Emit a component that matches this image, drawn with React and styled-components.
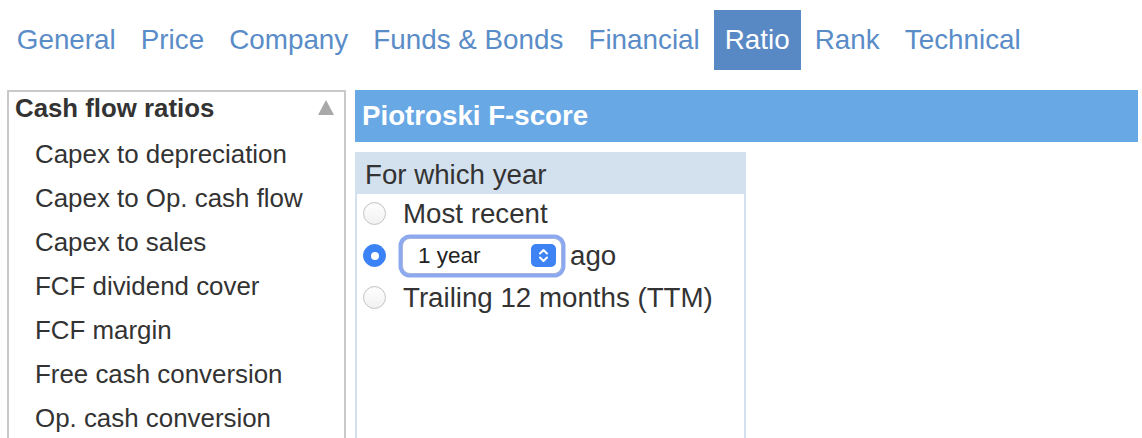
import React from 'react';
import styled, { createGlobalStyle } from 'styled-components';

const GlobalStyle = createGlobalStyle`
  html, body {
    margin: 0;
    padding: 0;
    overflow: hidden;
    background: #fff;
  }
  body {
    font-family: "Liberation Sans", Arial, Helvetica, sans-serif;
    color: #333;
  }
`;

const Page = styled.div`
  width: 1142px;
  height: 438px;
  overflow: hidden;
`;

const TabBar = styled.nav`
  display: flex;
  gap: 3.5px;
  margin: 10px 0 0 6px;
  height: 60px;
`;

const Tab = styled.a`
  display: flex;
  align-items: center;
  padding: 0 10.8px;
  font-size: 27.8px;
  color: ${p => (p.$active ? '#fff' : '#5a8cc8')};
  background: ${p => (p.$active ? '#5889c4' : 'transparent')};
  text-decoration: none;
  cursor: pointer;
`;

const Main = styled.div`
  display: flex;
  align-items: flex-start;
  gap: 9px;
  margin: 20px 4px 0 7px;
`;

const Sidebar = styled.div`
  width: 335px;
  height: 400px;
  border: 2px solid #c9c9c9;
  flex-shrink: 0;
`;

const GroupHead = styled.div`
  display: flex;
  align-items: center;
  justify-content: space-between;
  height: 31px;
  padding: 1px 10px 0 6px;
  font-size: 25.8px;
  font-weight: bold;
  color: #333;
`;

const Arrow = styled.span`
  width: 0;
  height: 0;
  border-left: 8.5px solid transparent;
  border-right: 8.5px solid transparent;
  border-bottom: 15px solid #a9a9a9;
  margin-top: -2px;
`;

const ItemList = styled.ul`
  list-style: none;
  margin: 7.5px 0 0;
  padding: 0;
`;

const Item = styled.li`
  padding-left: 26px;
  line-height: 44px;
  font-size: 25.9px;
  color: #333;
  white-space: nowrap;
`;

const Content = styled.section`
  flex: 1;
`;

const TitleBar = styled.h2`
  margin: 0;
  height: 52px;
  display: flex;
  align-items: center;
  padding-left: 7px;
  background: #68a8e5;
  color: #fff;
  font-size: 27.7px;
  font-weight: bold;
`;

const OptionBox = styled.div`
  width: 387px;
  height: 300px;
  margin-top: 10px;
  border: 2px solid #d3e1ee;
  border-top: 0;
`;

const OptionHead = styled.div`
  height: 42px;
  box-sizing: border-box;
  padding: 3px 0 0 10px;
  display: flex;
  align-items: center;
  margin: 0 -2px;
  background: #d3e1ee;
  font-size: 27.7px;
  color: #333;
`;

const Row = styled.label`
  display: flex;
  align-items: center;
  height: ${p => p.$h}px;
  padding-left: 6px;
  font-size: 27.7px;
  color: #333;
  white-space: nowrap;
`;

const Radio = styled.span`
  position: relative;
  width: 23px;
  height: 23px;
  box-sizing: border-box;
  border-radius: 50%;
  flex-shrink: 0;
  margin-right: ${p => p.$gap}px;
  border: 1px solid ${p => (p.$checked ? '#3b82f6' : '#c4c4c4')};
  background: ${p =>
    p.$checked ? '#3b82f6' : 'linear-gradient(#ffffff, #f1f1f1)'};
  box-shadow: ${p => (p.$checked ? 'none' : 'inset 0 1px 1px rgba(0,0,0,0.04)')};

  &::after {
    content: '';
    display: ${p => (p.$checked ? 'block' : 'none')};
    position: absolute;
    left: 50%;
    top: 50%;
    width: 8px;
    height: 8px;
    margin: -4px 0 0 -4px;
    border-radius: 50%;
    background: #fff;
  }
`;

const Select = styled.div`
  display: flex;
  align-items: center;
  justify-content: space-between;
  box-sizing: border-box;
  width: 160px;
  height: 36px;
  padding: 0 5px 0 15px;
  margin-right: 8px;
  border: 1px solid #a8b6dc;
  border-radius: 8px;
  background: #fff;
  box-shadow: 0 0 0 3.5px #8ca9ef;
  font-size: 22.5px;
  color: #222;
`;

const Stepper = styled.span`
  display: flex;
  align-items: center;
  justify-content: center;
  width: 25px;
  height: 23px;
  border-radius: 5px;
  background: #3d83f3;
`;

const items = [
  'Capex to depreciation',
  'Capex to Op. cash flow',
  'Capex to sales',
  'FCF dividend cover',
  'FCF margin',
  'Free cash conversion',
  'Op. cash conversion',
];

const tabs = ['General', 'Price', 'Company', 'Funds & Bonds', 'Financial', 'Ratio', 'Rank', 'Technical'];

export default function App() {
  return (
    <Page>
      <GlobalStyle />
      <TabBar>
        {tabs.map(t => (
          <Tab key={t} $active={t === 'Ratio'}>{t}</Tab>
        ))}
      </TabBar>
      <Main>
        <Sidebar>
          <GroupHead>
            Cash flow ratios
            <Arrow />
          </GroupHead>
          <ItemList>
            {items.map(i => (
              <Item key={i}>{i}</Item>
            ))}
          </ItemList>
        </Sidebar>
        <Content>
          <TitleBar>Piotroski F-score</TitleBar>
          <OptionBox>
            <OptionHead>For which year</OptionHead>
            <Row $h={39}>
              <Radio $gap={17} />
              Most recent
            </Row>
            <Row $h={45}>
              <Radio $checked $gap={16} />
              <Select>
                1 year
                <Stepper>
                  <svg width="13" height="17" viewBox="0 0 13 17" fill="none">
                    <path d="M3 6.5 L6.5 3 L10 6.5" stroke="#fff" strokeWidth="2" strokeLinecap="round" strokeLinejoin="round" />
                    <path d="M3 10.5 L6.5 14 L10 10.5" stroke="#fff" strokeWidth="2" strokeLinecap="round" strokeLinejoin="round" />
                  </svg>
                </Stepper>
              </Select>
              ago
            </Row>
            <Row $h={39}>
              <Radio $gap={17} />
              Trailing 12 months (TTM)
            </Row>
          </OptionBox>
        </Content>
      </Main>
    </Page>
  );
}
